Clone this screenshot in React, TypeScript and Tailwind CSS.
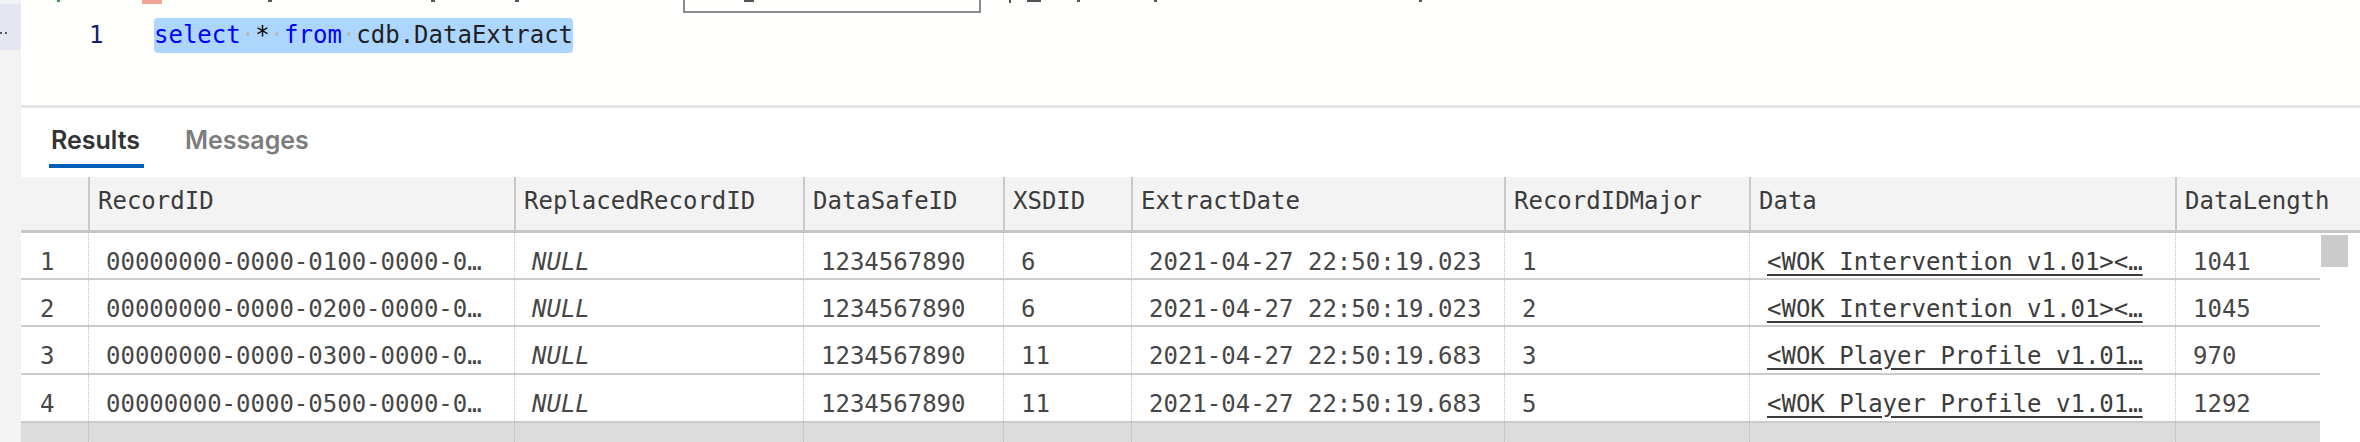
import React from 'react';

type Row = {
  n: string;
  id: string;
  safe: string;
  xsd: string;
  date: string;
  major: string;
  data: string;
  len: string;
  h: string;
};

const rows: Row[] = [
  { n: '1', id: '00000000-0000-0100-0000-0…', safe: '1234567890', xsd: '6', date: '2021-04-27 22:50:19.023', major: '1', data: '<WOK_Intervention_v1.01><…', len: '1041', h: 'h-[47px]' },
  { n: '2', id: '00000000-0000-0200-0000-0…', safe: '1234567890', xsd: '6', date: '2021-04-27 22:50:19.023', major: '2', data: '<WOK_Intervention_v1.01><…', len: '1045', h: 'h-[47px]' },
  { n: '3', id: '00000000-0000-0300-0000-0…', safe: '1234567890', xsd: '11', date: '2021-04-27 22:50:19.683', major: '3', data: '<WOK_Player_Profile_v1.01…', len: '970', h: 'h-[48px]' },
  { n: '4', id: '00000000-0000-0500-0000-0…', safe: '1234567890', xsd: '11', date: '2021-04-27 22:50:19.683', major: '5', data: '<WOK_Player_Profile_v1.01…', len: '1292', h: 'h-[48px]' },
];

// column widths, first one is the row-number gutter
const widths = ['w-[67px]', 'w-[426px]', 'w-[289px]', 'w-[200px]', 'w-[128px]', 'w-[373px]', 'w-[245px]', 'w-[426px]', 'w-[145px]'];
const headers = ['RecordID', 'ReplacedRecordID', 'DataSafeID', 'XSDID', 'ExtractDate', 'RecordIDMajor', 'Data', 'DataLength'];

const mono = "font-['DejaVu_Sans_Mono',monospace]";

const Cell: React.FC<{ w: string; first?: boolean; children?: React.ReactNode }> = ({ w, first, children }) => (
  <div
    className={`${w} shrink-0 h-full overflow-hidden whitespace-nowrap pt-[15px] leading-[28px] ${
      first ? 'pl-[19px]' : 'pl-[17px] border-l border-dotted border-[#c2c2c2]'
    }`}
  >
    {children}
  </div>
);

const Dot = () => <span className="text-[#b9b9b9]">·</span>;

export default function App() {
  return (
    <div className={`w-[2360px] h-[442px] flex overflow-hidden bg-white text-[24px] ${mono}`}>
      {/* left gutter strip */}
      <div className="w-[21px] h-full shrink-0 bg-[#f3f3f3]">
        <div className="mt-[4px] h-[46px] bg-[#e4e6f2] pt-[28px] flex gap-[3px]">
          <span className="w-[2px] h-[2px] bg-[#555]" />
          <span className="w-[2px] h-[2px] bg-[#555]" />
        </div>
      </div>

      <div className="flex-1 flex flex-col min-w-0">
        {/* editor */}
        <div className="h-[105px] shrink-0 flex flex-col bg-[#fffffe]">
          {/* tail of the previous line, clipped */}
          <div className="h-[13px] flex items-start">
            <span className="ml-[36px] w-[3px] h-[2px] bg-[#3f9b3f]" />
            <span className="ml-[82px] w-[20px] h-[4px] bg-[#f2a596]" />
            <span className="ml-[106px] w-[4px] h-[2px] bg-[#555]" />
            <span className="ml-[159px] w-[4px] h-[2px] bg-[#555]" />
            <span className="ml-[80px] w-[4px] h-[2px] bg-[#555]" />
            <div className="ml-[164px] w-[298px] h-[13px] border-2 border-t-0 border-[#8c8c8c] flex items-start">
              <span className="ml-[59px] w-[10px] h-[2px] bg-[#555]" />
            </div>
            <span className="ml-[28px] w-[2px] h-[3px] bg-[#555]" />
            <span className="ml-[16px] w-[14px] h-[2px] bg-[#555]" />
            <span className="ml-[36px] w-[3px] h-[2px] bg-[#555]" />
            <span className="ml-[74px] w-[3px] h-[2px] bg-[#555]" />
            <span className="ml-[262px] w-[3px] h-[2px] bg-[#555]" />
          </div>
          <div className="mt-[5px] h-[35px] flex items-center leading-[35px]">
            <span className="ml-[68px] w-[15px] text-[#0b216f]">1</span>
            <span className="ml-[50px] rounded-[4px] bg-[#add6ff] whitespace-pre">
              <span className="text-[#0000ff]">select</span>
              <Dot />
              <span className="text-black">*</span>
              <Dot />
              <span className="text-[#0000ff]">from</span>
              <Dot />
              <span className="text-[#1f1f1f]">cdb.DataExtract</span>
            </span>
          </div>
        </div>

        <div className="h-[3px] shrink-0 bg-[#e6e6e6]" />

        {/* tabs */}
        <div className="h-[69px] shrink-0 flex items-start pt-[17px] font-['Inter',sans-serif] font-semibold text-[25px] leading-[30px]">
          <div className="ml-[28px] w-[95px] flex flex-col">
            <span className="pl-[2px] text-[#333]">Results</span>
            <span className="mt-[9px] h-[4px] w-full bg-[#005fb8]" />
          </div>
          <span className="ml-[41px] text-[#7d7d7d]">Messages</span>
        </div>

        {/* grid header */}
        <div className="h-[56px] shrink-0 flex bg-[#f3f3f3] border-b-[3px] border-[#c6c6c6] text-[#3b3b3b]">
          <div className="w-[67px] shrink-0" />
          {headers.map((h, i) => (
            <div
              key={h}
              className={`${i === headers.length - 1 ? 'flex-1' : widths[i + 1]} shrink-0 h-full border-l-2 border-[#c9c9c9] pl-[8px] pt-[10px] leading-[28px] whitespace-nowrap`}
            >
              {h}
            </div>
          ))}
        </div>

        {/* grid body */}
        <div className="flex-1 flex min-h-0">
          <div className="w-[2299px] shrink-0 flex flex-col text-[#474747]">
            {rows.map((r) => (
              <div key={r.n} className={`${r.h} shrink-0 flex border-b-2 border-[#cbcbcb]`}>
                <Cell w={widths[0]} first>{r.n}</Cell>
                <Cell w={widths[1]}>{r.id}</Cell>
                <Cell w={widths[2]}><span className="italic">NULL</span></Cell>
                <Cell w={widths[3]}>{r.safe}</Cell>
                <Cell w={widths[4]}>{r.xsd}</Cell>
                <Cell w={widths[5]}>{r.date}</Cell>
                <Cell w={widths[6]}>{r.major}</Cell>
                <Cell w={widths[7]}><span className="underline underline-offset-[4px] text-[#3c3c3c]">{r.data}</span></Cell>
                <Cell w={widths[8]}>{r.len}</Cell>
              </div>
            ))}
            <div className="flex-1 flex bg-[#dcdcdc]">
              {widths.map((w, i) => (
                <div key={w + i} className={`${w} shrink-0 h-full ${i === 0 ? '' : 'border-l border-dotted border-[#b8b8b8]'}`} />
              ))}
            </div>
          </div>
          <div className="flex-1 bg-white">
            <div className="mt-[2px] ml-[1px] w-[27px] h-[32px] bg-[#cbcbcb]" />
          </div>
        </div>
      </div>
    </div>
  );
}
